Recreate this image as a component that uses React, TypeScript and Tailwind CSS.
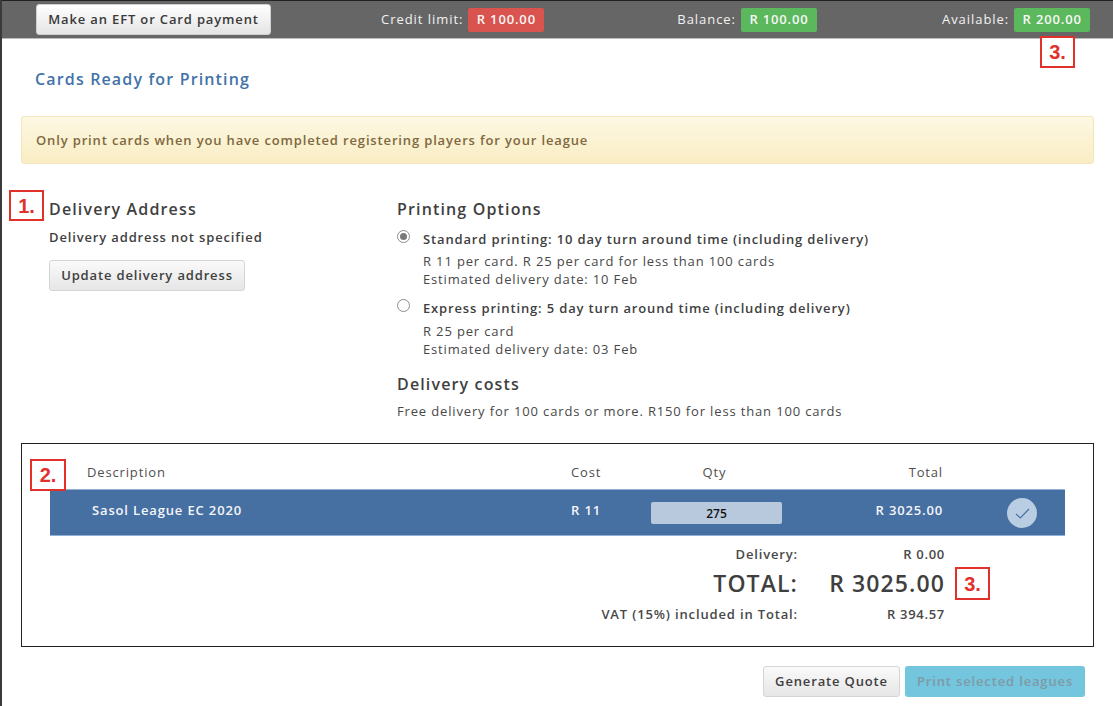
import React from "react";

function Marker({ n, className }: { n: string; className: string }) {
  return (
    <div className={`absolute flex items-center justify-center border-[2px] border-[#e0322b] bg-white font-['Liberation_Sans',sans-serif] text-[20px] font-bold tracking-normal text-[#e0322b] ${className}`}>
      {n}
    </div>
  );
}

function Badge({ label, value, red }: { label: string; value: string; red?: boolean }) {
  return (
    <div className="flex items-center">
      <span className="text-[13px] tracking-[0.95px] text-[#f2f2f2]">{label}</span>
      <span className={`ml-[5px] flex h-[24px] w-[76px] items-center justify-center rounded-[2px] text-[13px] font-semibold tracking-[0.85px] text-[#f7f7f7] ${red ? "bg-[#d9534f]" : "bg-[#5cb85c]"}`}>
        {value}
      </span>
    </div>
  );
}

function Radio({ checked }: { checked?: boolean }) {
  return (
    <span className="flex h-[13px] w-[13px] shrink-0 items-center justify-center rounded-full border border-[#8d8d8d] bg-white">
      {checked && <span className="h-[7px] w-[7px] rounded-full bg-[#7a7a7a]" />}
    </span>
  );
}

export default function App() {
  return (
    <div className="relative h-[706px] w-[1113px] overflow-hidden border-l-[2px] border-[#3a3a3a] bg-white font-['Open_Sans',sans-serif] text-[#484848] tracking-[0.85px]">
      <div className="flex h-[39px] items-center border-t border-b border-t-[#222] border-b-[#bdbdbd] bg-[#666666]">
        <button className="ml-[34px] h-[31px] w-[235px] rounded-[3px] border border-[#d0d0d0] bg-gradient-to-b from-white to-[#e4e4e4] text-[13px] font-semibold tracking-[0.85px] text-[#3a3a3a]">
          Make an EFT or Card payment
        </button>
        <div className="ml-[110px]"><Badge label="Credit limit:" value="R 100.00" red /></div>
        <div className="ml-[133px]"><Badge label="Balance:" value="R 100.00" /></div>
        <div className="ml-[125px]"><Badge label="Available:" value="R 200.00" /></div>
      </div>

      <h1 className="ml-[33px] mt-[28px] text-[16px] leading-[24px] font-semibold tracking-[1.15px] text-[#4273a8]">Cards Ready for Printing</h1>

      <div className="ml-[19px] mt-[25px] flex h-[48px] w-[1073px] items-center rounded-[3px] border border-[#f3e6bd] bg-gradient-to-b from-[#fdf8e3] to-[#f9edc3] pl-[14px] pt-[1px] text-[13px] font-semibold tracking-[0.85px] text-[#80683f]">
        Only print cards when you have completed registering players for your league
      </div>

      <div className="mt-[34px] flex">
        <div className="ml-[47px] w-[348px]">
          <h2 className="text-[16px] leading-[22px] font-semibold tracking-[1.15px] text-[#3f3f3f]">Delivery Address</h2>
          <p className="mt-[8px] text-[13px] leading-[18px] font-semibold text-[#3f3f3f]">Delivery address not specified</p>
          <button className="mt-[14px] h-[31px] w-[196px] rounded-[3px] border border-[#d5d5d5] bg-gradient-to-b from-[#fafafa] to-[#e6e6e6] text-[13px] font-semibold text-[#3f3f3f]">
            Update delivery address
          </button>
        </div>
        <div>
          <h2 className="text-[16px] leading-[22px] font-semibold tracking-[1.15px] text-[#3f3f3f]">Printing Options</h2>
          <div className="mt-[10px] flex gap-[13px]">
            <Radio checked />
            <div>
              <p className="text-[13px] leading-[18px] font-semibold text-[#3f3f3f]">Standard printing: 10 day turn around time (including delivery)</p>
              <p className="mt-[4px] text-[13px] leading-[18px]">R 11 per card. R 25 per card for less than 100 cards</p>
              <p className="text-[13px] leading-[18px]">Estimated delivery date: 10 Feb</p>
            </div>
          </div>
          <div className="mt-[11px] flex gap-[13px]">
            <Radio />
            <div>
              <p className="text-[13px] leading-[18px] font-semibold text-[#3f3f3f]">Express printing: 5 day turn around time (including delivery)</p>
              <p className="mt-[5px] text-[13px] leading-[18px]">R 25 per card</p>
              <p className="text-[13px] leading-[18px]">Estimated delivery date: 03 Feb</p>
            </div>
          </div>
          <h2 className="mt-[15px] text-[16px] leading-[22px] font-semibold tracking-[1.15px] text-[#3f3f3f]">Delivery costs</h2>
          <p className="mt-[7px] text-[13px] leading-[18px]">Free delivery for 100 cards or more. R150 for less than 100 cards</p>
        </div>
      </div>

      <div className="ml-[19px] mt-[23px] h-[204px] w-[1073px] border border-[#222] pl-[28px]">
        <div className="flex h-[45px] items-center pt-[12px] text-[13px] text-[#4f4f4f]">
          <span className="w-[521px] pl-[37px]">Description</span>
          <span className="w-[80px]">Cost</span>
          <span className="w-[127px] text-center">Qty</span>
          <span className="w-[165px] text-right">Total</span>
        </div>
        <div className="flex h-[47px] w-[1015px] items-center border-y border-[#8fb1da] bg-[#466fa2] text-[13px] font-semibold text-[#f4f6f9]">
          <span className="w-[521px] pb-[3px] pl-[42px]">Sasol League EC 2020</span>
          <span className="w-[80px] pb-[3px]">R 11</span>
          <span className="mt-[1px] flex h-[22px] w-[131px] items-center justify-center rounded-[2px] bg-[#b9c9dd] pt-[1px] text-[12px] tracking-normal text-[#111]">275</span>
          <span className="w-[161px] pb-[3px] text-right">R 3025.00</span>
          <span className="ml-[64px] mt-[1px] flex h-[30px] w-[30px] items-center justify-center rounded-full bg-[#b9cde3]">
            <svg width="15" height="11" viewBox="0 0 15 11" fill="none" stroke="#466fa2" strokeWidth="1.1"><path d="M1 6 L5.3 10 L14 1" /></svg>
          </span>
        </div>
        <div className="mt-[7px] grid w-[895px] grid-cols-[748px_147px] items-center text-right text-[13px] font-semibold text-[#484848]">
          <span className="leading-[22px]">Delivery:</span>
          <span className="leading-[22px] tracking-[0.7px]">R 0.00</span>
          <span className="pb-[2px] text-[23px] leading-[36px] tracking-[1.1px] text-[#3f3f3f]">TOTAL:</span>
          <span className="pb-[2px] text-[23px] leading-[36px] tracking-[1.1px] text-[#3f3f3f]">R 3025.00</span>
          <span className="leading-[22px]">VAT (15%) included in Total:</span>
          <span className="leading-[22px] tracking-[0.7px]">R 394.57</span>
        </div>
      </div>

      <div className="ml-[761px] mt-[19px] flex gap-[5px]">
        <button className="h-[31px] w-[137px] rounded-[3px] border border-[#d5d5d5] bg-gradient-to-b from-[#fafafa] to-[#e6e6e6] text-[13px] font-semibold text-[#3f3f3f]">Generate Quote</button>
        <button className="h-[31px] w-[180px] rounded-[3px] bg-[#74c5de] text-[13px] font-semibold text-[#7f9aa5]">Print selected leagues</button>
      </div>

      <Marker n="3." className="left-[1038px] top-[36px] h-[32px] w-[35px]" />
      <Marker n="1." className="left-[7px] top-[190px] h-[31px] w-[35px]" />
      <Marker n="2." className="left-[28px] top-[459px] h-[32px] w-[36px]" />
      <Marker n="3." className="left-[953px] top-[567px] h-[33px] w-[35px]" />
    </div>
  );
}
